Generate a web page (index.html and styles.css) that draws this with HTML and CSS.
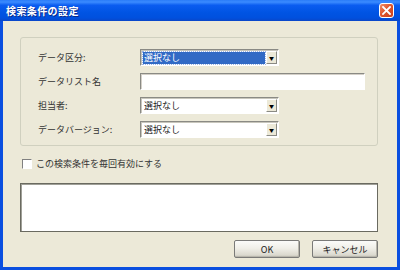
FILE: index.html
```html
<!DOCTYPE html>
<html lang="ja">
<head>
    <meta charset="UTF-8">
    <title>検索条件の設定</title>
    <link rel="stylesheet" href="styles.css">
</head>
<body>
    <div class="window">
        <div class="titlebar">
            <span class="title">検索条件の設定</span>
            <span class="close-button">
                <svg width="9" height="9" viewBox="0 0 9 9">
                    <path d="M1 1 L8 8 M8 1 L1 8" stroke="#fff" stroke-width="1.8" stroke-linecap="square"/>
                </svg>
            </span>
        </div>
        <div class="client">
            <div class="group-box">
                <div class="field-label">データ区分:</div>
                <div class="combo">
                    <span class="combo-text selected">選択なし</span>
                    <span class="combo-arrow">▼</span>
                </div>
                <div class="field-label">データリスト名</div>
                <div class="text-field"></div>
                <div class="field-label">担当者:</div>
                <div class="combo">
                    <span class="combo-text">選択なし</span>
                    <span class="combo-arrow">▼</span>
                </div>
                <div class="field-label">データバージョン:</div>
                <div class="combo">
                    <span class="combo-text">選択なし</span>
                    <span class="combo-arrow">▼</span>
                </div>
            </div>

            <div class="check-row">
                <span class="check-box"></span>
                <span class="check-label">この検索条件を毎回有効にする</span>
            </div>

            <div class="memo-box"></div>

            <div class="button-row">
                <button class="dialog-button">OK</button>
                <button class="dialog-button">キャンセル</button>
            </div>
        </div>
    </div>
</body>
</html>
```

FILE: styles.css
```css
body {
    margin: 0;
    padding: 0;
    font-family: "Noto Sans CJK JP", "Liberation Sans", sans-serif;
    font-size: 9px;
    color: #000;
    background-color: #ece9d8;
}
.window {
    width: 400px;
    height: 270px;
    box-sizing: border-box;
    display: flex;
    flex-direction: column;
    background-color: #0a4fe0;
}
.titlebar {
    height: 21px;
    flex-shrink: 0;
    display: flex;
    align-items: center;
    padding: 0 6px 0 6px;
    background: linear-gradient(#2a7cf8 0%, #3b8bff 10%, #0a5cf0 25%, #0054e3 60%, #0050de 85%, #0a46c8 100%);
}
.title {
    color: #fff;
    font-weight: bold;
    font-size: 10px;
    letter-spacing: 0.4px;
    text-shadow: 1px 1px 0 #0a2a8a;
}
.close-button {
    margin-left: auto;
    width: 13px;
    height: 13px;
    display: flex;
    align-items: center;
    justify-content: center;
    background: linear-gradient(135deg, #f0906c 0%, #e0562e 45%, #c8401c 100%);
    border: 1px solid #fff;
    border-radius: 3px;
}
.client {
    flex: 1;
    margin: 0 3px 3px 3px;
    background-color: #ece9d8;
    padding: 16px 19px 0 17px;
    display: flex;
    flex-direction: column;
}
.group-box {
    border: 1px solid #d0d0bf;
    border-radius: 3px;
    padding: 11px 0 7px 17px;
    display: grid;
    grid-template-columns: 102px auto;
    grid-auto-rows: 17px;
    row-gap: 7px;
    align-items: center;
}
.field-label {
    color: #333;
    line-height: 17px;
}
.combo {
    width: 139px;
    height: 17px;
    box-sizing: border-box;
    border-top: 1px solid #8a8a84;
    border-left: 1px solid #8a8a84;
    border-right: 1px solid #fff;
    border-bottom: 1px solid #fff;
    box-shadow: inset 1px 1px 0 #c8c6bc;
    background-color: #fff;
    display: flex;
    align-items: center;
    padding: 2px 1px 2px 2px;
}
.combo-text {
    flex: 1;
    height: 12px;
    line-height: 12px;
    padding-left: 1px;
    margin-right: 1px;
    color: #222;
}
.combo-text.selected {
    background-color: #316ac5;
    color: #fff;
    outline: 1px dotted #9cb6e4;
}
.combo-arrow {
    width: 11px;
    height: 13px;
    box-sizing: border-box;
    background-color: #ece9d8;
    border-top: 1px solid #fff;
    border-left: 1px solid #fff;
    border-right: 1px solid #8a8a84;
    border-bottom: 1px solid #8a8a84;
    font-size: 5px;
    line-height: 11px;
    text-align: center;
    color: #000;
}
.text-field {
    width: 225px;
    height: 17px;
    box-sizing: border-box;
    border-top: 1px solid #8a8a84;
    border-left: 1px solid #8a8a84;
    border-right: 1px solid #fff;
    border-bottom: 1px solid #fff;
    box-shadow: inset 1px 1px 0 #d4d0c8;
    background-color: #fff;
}
.check-row {
    margin-top: 12px;
    height: 11px;
    display: flex;
    align-items: center;
    gap: 4px;
    padding-left: 2px;
}
.check-box {
    width: 10px;
    height: 10px;
    box-sizing: border-box;
    border-top: 1px solid #808080;
    border-left: 1px solid #808080;
    border-right: 1px solid #fff;
    border-bottom: 1px solid #fff;
    background-color: #fff;
}
.check-label {
    color: #333;
    line-height: 11px;
}
.memo-box {
    margin-top: 14px;
    height: 49px;
    width: 358px;
    box-sizing: border-box;
    border: 1px solid #6a6a60;
    box-shadow: inset 1px 1px 0 #a0a098;
    background-color: #fff;
}
.button-row {
    margin-top: 8px;
    display: flex;
    justify-content: flex-end;
    gap: 12px;
    width: 358px;
}
.dialog-button {
    width: 66px;
    height: 18px;
    padding: 0;
    font-family: "Noto Sans CJK JP", "Liberation Sans", sans-serif;
    font-size: 9px;
    color: #222;
    border: 1px solid #7a7a78;
    border-radius: 2px;
    background: linear-gradient(#fbfbf9 0%, #f0efe8 45%, #dcdad0 85%, #c8c6bc 100%);
    box-shadow: inset -1px -1px 0 #b8b6ac;
}
```
